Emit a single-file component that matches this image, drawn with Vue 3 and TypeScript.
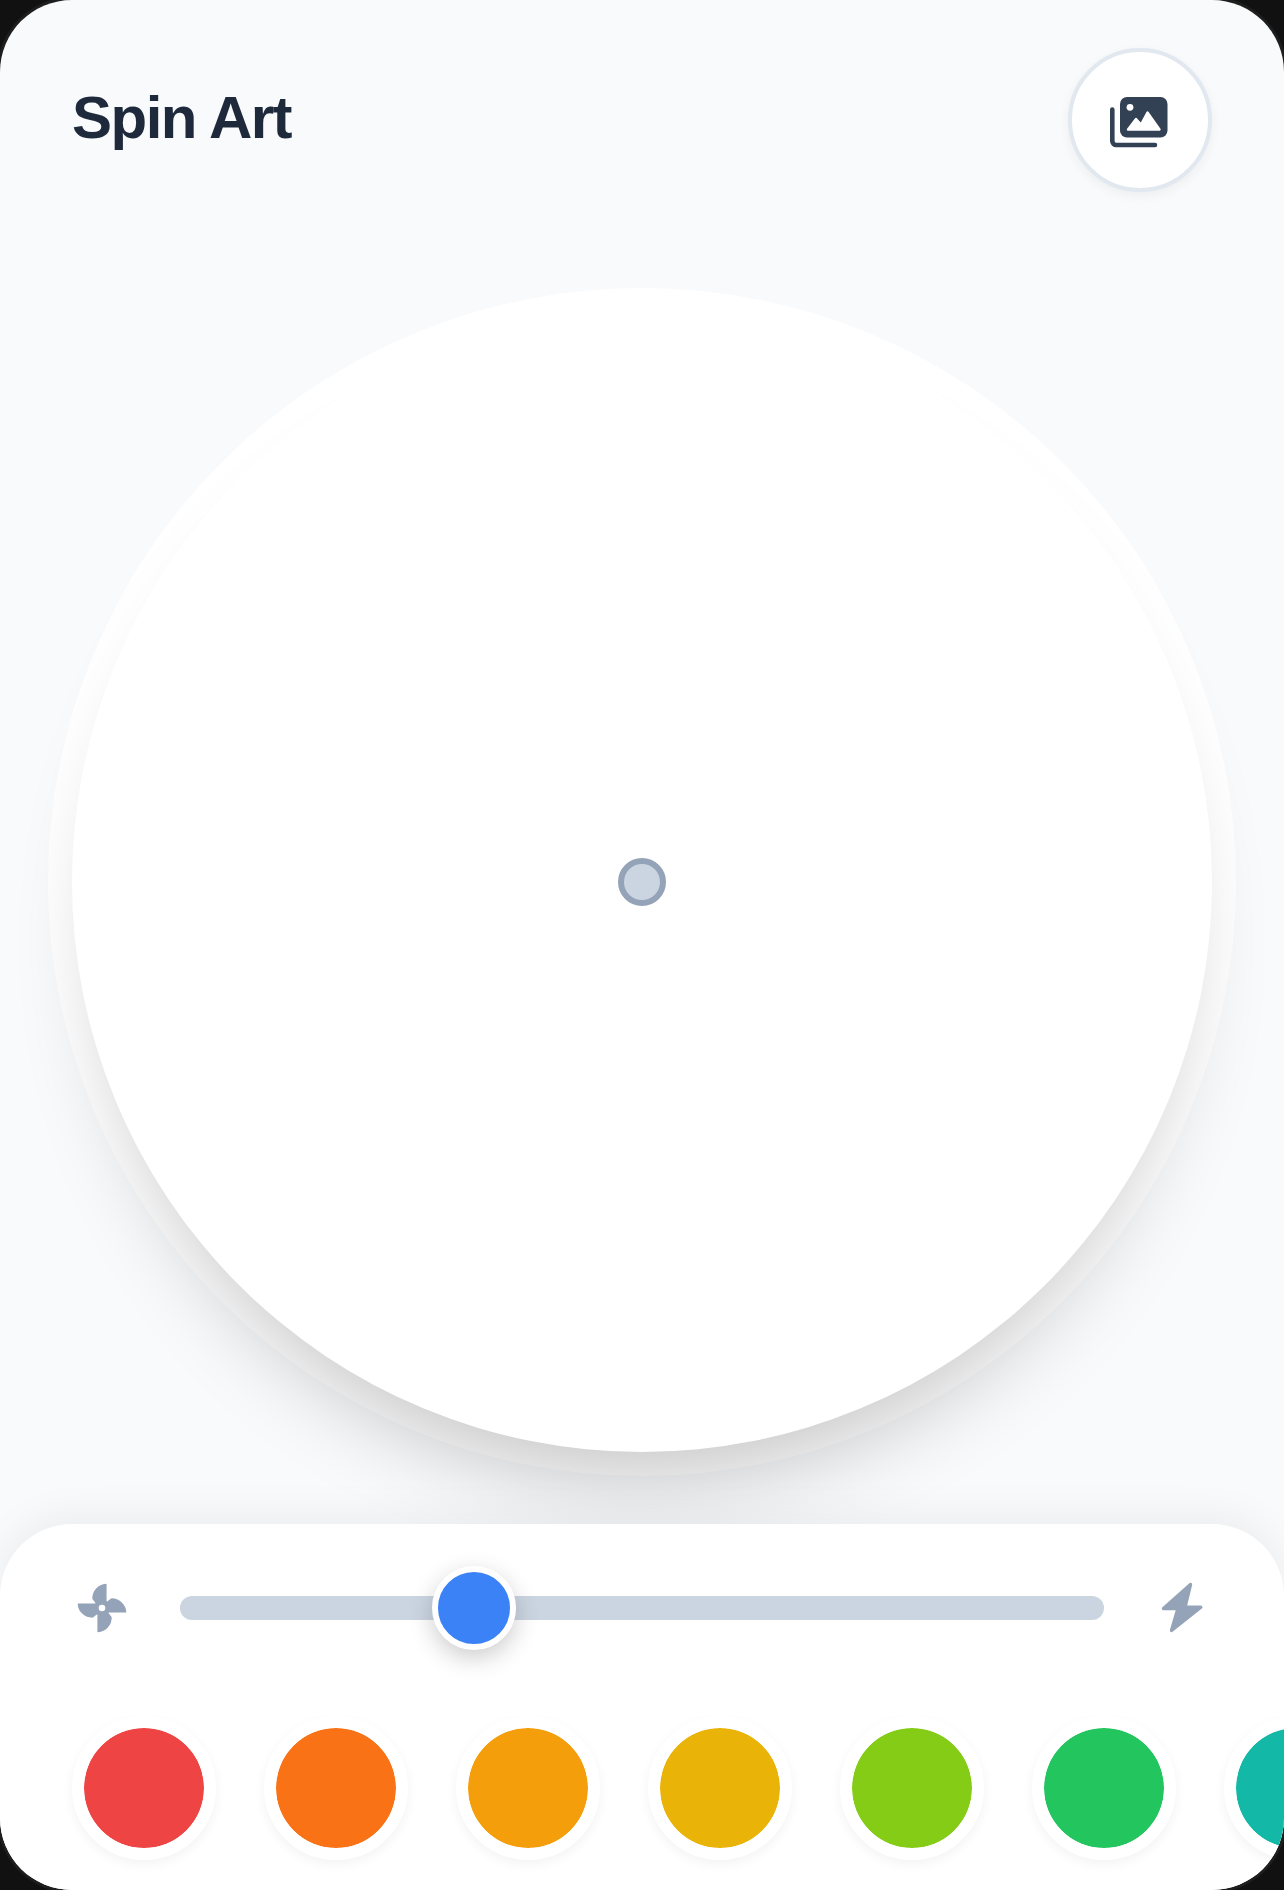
<script setup lang="ts">
import { ref } from 'vue';

const speed = ref(30);
const colors = ['#ef4444', '#f97316', '#f59e0b', '#eab308', '#84cc16', '#22c55e', '#14b8a6', '#06b6d4', '#3b82f6', '#8b5cf6'];
const activeColor = ref(colors[0]);
const blades = [0, 90, 180, 270];
</script>

<template>
  <div class="app">
    <header class="header">
      <h1 class="title">Spin Art</h1>
      <button class="gallery-btn" aria-label="Gallery">
        <svg width="64" height="64" viewBox="0 -2 64 64">
          <path d="M4.3 19.5V51a4 4 0 0 0 4 4H47" fill="none" stroke="#334155" stroke-width="4.6" stroke-linecap="round" />
          <rect x="12" y="7" width="47.5" height="40.5" rx="7" fill="#334155" />
          <circle cx="22" cy="17.3" r="3.4" fill="#fff" />
          <path d="M39.5 22.5L51.5 39.5H20L28 29L33 34.5Z" fill="#fff" stroke="#fff" stroke-width="2.4" stroke-linejoin="round" />
        </svg>
      </button>
    </header>

    <main class="stage">
      <div class="wheel">
        <div class="canvas">
          <span class="spindle"></span>
        </div>
      </div>
    </main>

    <section class="panel">
      <div class="speed-row">
        <span class="speed-icon">
          <svg width="60" height="60" viewBox="-30 -30 60 60">
            <circle r="8" fill="#94a3b8" />
            <path
              v-for="deg in blades"
              :key="deg"
              d="M3.9 -23.6A14 14 0 0 0 -9 -9.5L-5 -4.3H3.9Z"
              fill="#94a3b8"
              stroke="#94a3b8"
              stroke-width="1.4"
              stroke-linejoin="round"
              :transform="`rotate(${deg})`"
            />
            <circle r="3.3" fill="#fff" />
          </svg>
        </span>
        <input v-model.number="speed" class="slider" type="range" min="0" max="100" />
        <span class="speed-icon">
          <svg width="60" height="60" viewBox="-3 0 60 60">
            <path
              d="M35.5 6.5L8.5 30.5H23L16.5 52.5L45.8 29.2H30Z"
              fill="#94a3b8"
              stroke="#94a3b8"
              stroke-width="3.4"
              stroke-linejoin="round"
            />
          </svg>
        </span>
      </div>

      <div class="swatches">
        <button
          v-for="color in colors"
          :key="color"
          class="swatch"
          :style="{ background: color }"
          :aria-label="color"
          @click="activeColor = color"
        ></button>
      </div>
    </section>
  </div>
</template>

<style scoped>
.app {
  width: 1284px;
  height: 1890px;
  display: flex;
  flex-direction: column;
  background: #f8fafc;
  border-radius: 72px;
  overflow: hidden;
  box-shadow: 0 0 0 3px #1e1e1e;
  font-family: "Liberation Sans", Arial, sans-serif;
}

.header {
  display: flex;
  align-items: center;
  justify-content: space-between;
  padding: 48px 72px;
}

.title {
  margin: 0 0 6px;
  font-size: 60px;
  font-weight: 700;
  letter-spacing: -1.5px;
  color: #1e293b;
}

.gallery-btn {
  width: 144px;
  height: 144px;
  display: flex;
  align-items: center;
  justify-content: center;
  padding: 0;
  background: #fff;
  border: 4px solid #e2e8f0;
  border-radius: 50%;
  box-shadow: 0 4px 12px rgba(0, 0, 0, 0.05);
}

.stage {
  flex: 1;
  min-height: 0;
  display: flex;
  align-items: center;
  justify-content: center;
}

.wheel {
  flex-shrink: 0;
  width: 1188px;
  height: 1188px;
  padding: 24px;
  box-sizing: border-box;
  display: flex;
  background: #fff;
  border-radius: 50%;
}

.canvas {
  flex: 1;
  display: flex;
  align-items: center;
  justify-content: center;
  background: #fff;
  border-radius: 50%;
  box-shadow: 0 60px 90px -36px rgba(0, 0, 0, 0.24);
}

.spindle {
  width: 48px;
  height: 48px;
  box-sizing: border-box;
  background: #cbd5e1;
  border: 6px solid #94a3b8;
  border-radius: 50%;
}

.panel {
  position: relative;
  padding: 48px 0 0 72px;
  height: 366px;
  box-sizing: border-box;
  background: #fff;
  border-radius: 72px 72px 0 0;
  box-shadow: 0 -8px 40px rgba(0, 0, 0, 0.06);
}

.speed-row {
  display: flex;
  align-items: center;
  gap: 48px;
  height: 72px;
  padding-right: 72px;
}

.speed-icon {
  width: 60px;
  height: 60px;
  flex-shrink: 0;
}

.speed-icon svg {
  display: block;
}

.slider {
  flex: 1;
  min-width: 0;
  height: 24px;
  margin: 0;
  appearance: none;
  -webkit-appearance: none;
  background: #cbd5e1;
  border-radius: 12px;
  outline: none;
}

.slider::-webkit-slider-thumb {
  -webkit-appearance: none;
  width: 84px;
  height: 84px;
  box-sizing: border-box;
  background: #3b82f6;
  border: 6px solid #fff;
  border-radius: 50%;
  box-shadow: 0 8px 24px rgba(0, 0, 0, 0.2);
}

.swatches {
  display: flex;
  gap: 48px;
  margin-top: 72px;
  overflow: hidden;
  margin-left: -24px;
  padding: 0 0 24px 24px;
}

.swatch {
  width: 144px;
  height: 144px;
  flex-shrink: 0;
  box-sizing: border-box;
  padding: 0;
  border: 12px solid #fff;
  border-radius: 50%;
  background-clip: padding-box !important;
  box-shadow: 0 4px 12px rgba(0, 0, 0, 0.05);
}
</style>

<style>
body {
  background: #111;
}
</style>
